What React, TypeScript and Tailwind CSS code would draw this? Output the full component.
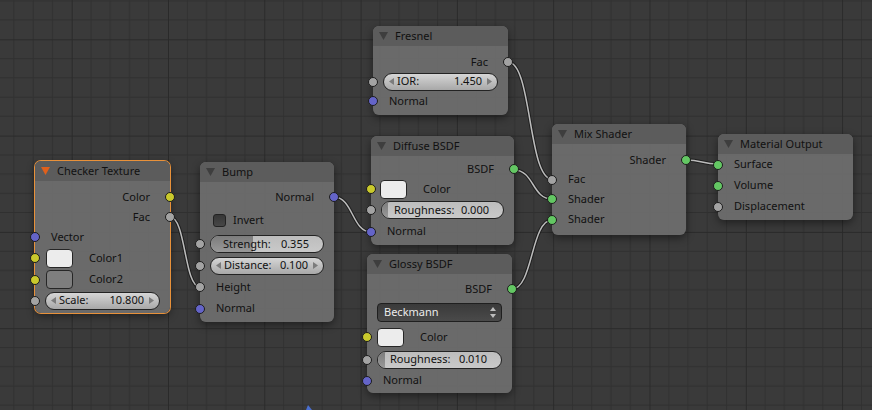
import type { ReactNode } from 'react';

type SockColor = 'yellow' | 'gray' | 'blue' | 'green';

const SOCK: Record<SockColor, string> = {
  yellow: 'bg-[#c9c92c]',
  gray: 'bg-[#a3a3a3]',
  blue: 'bg-[#6464c8]',
  green: 'bg-[#63c763]',
};

function Socket({ color, side }: { color: SockColor; side: 'in' | 'out' }) {
  return (
    <span
      className={`absolute top-1/2 -translate-y-1/2 w-[10px] h-[10px] rounded-full border border-[#1c1c1c] ${SOCK[color]} ${
        side === 'in' ? 'left-[-5px]' : 'right-[-5px]'
      }`}
    />
  );
}

function Node({
  title,
  className,
  selected,
  children,
}: {
  title: string;
  className: string;
  selected?: boolean;
  children: ReactNode;
}) {
  return (
    <div
      className={`absolute rounded-[6px] bg-[#6d6d6d]/95 shadow-[0_3px_8px_rgba(0,0,0,0.45)] ${
        selected ? 'ring-1 ring-[#e8913a]' : ''
      } ${className}`}
    >
      <div className="h-[20px] flex items-center rounded-t-[6px] bg-[#5c5c5c] pl-[6px]">
        <svg width="9" height="8" viewBox="0 0 9 8">
          <polygon points="0,0 9,0 4.5,8" fill={selected ? '#e0601c' : '#3e3e3e'} />
        </svg>
        <span className="ml-[7px] text-[11px] text-[#111]">{title}</span>
      </div>
      {children}
    </div>
  );
}

function Out({ label, color, h }: { label: string; color: SockColor; h: string }) {
  return (
    <div className={`relative flex items-center justify-end pr-[20px] ${h}`}>
      {label}
      <Socket color={color} side="out" />
    </div>
  );
}

function In({ label, color, h }: { label: string; color: SockColor; h: string }) {
  return (
    <div className={`relative flex items-center pl-[16px] ${h}`}>
      {label}
      <Socket color={color} side="in" />
    </div>
  );
}

function Swatch({ label, fill, h, pl }: { label: string; fill: string; h: string; pl: string }) {
  return (
    <div className={`relative flex items-center ${pl} ${h}`}>
      <span className={`w-[27px] h-[19px] rounded-[4px] border border-[#262626] ${fill}`} />
      <span className="ml-[16px]">{label}</span>
      <Socket color="yellow" side="in" />
    </div>
  );
}

function Arrow({ dir }: { dir: 'l' | 'r' }) {
  return (
    <svg width="5" height="7" viewBox="0 0 5 7" className="shrink-0">
      <polygon points={dir === 'l' ? '5,0 5,7 0,3.5' : '0,0 0,7 5,3.5'} fill="#7c7c7c" />
    </svg>
  );
}

function NumField({ label, value, h, px }: { label: string; value: string; h: string; px: string }) {
  return (
    <div className={`relative flex items-center ${px} ${h}`}>
      <div className="flex-1 h-[18px] flex items-center rounded-full border border-[#232323] bg-gradient-to-b from-[#d6d6d6] to-[#a8a8a8] px-[5px] text-[#111]">
        <Arrow dir="l" />
        <span className="ml-[3px]">{label}</span>
        <span className="flex-1" />
        <span className="mr-[5px]">{value}</span>
        <Arrow dir="r" />
      </div>
      <Socket color="gray" side="in" />
    </div>
  );
}

function Slider({ label, value, pct, h, px }: { label: string; value: string; pct: number; h: string; px: string }) {
  return (
    <div className={`relative flex items-center ${px} ${h}`}>
      <div className="relative flex-1 h-[18px] rounded-full border border-[#232323] bg-gradient-to-b from-[#bdbdbd] to-[#c9c9c9] overflow-hidden">
        <div
          className="absolute left-0 top-0 bottom-0 bg-gradient-to-b from-[#7c7c7c] to-[#999999]"
          style={{ width: `calc(6px + ${pct} * (100% - 12px))` }}
        />
        <div className="relative h-full flex items-center pl-[12px] pr-[14px] text-[#111]">
          <span>{label}</span>
          <span className="flex-1" />
          <span>{value}</span>
        </div>
      </div>
      <Socket color="gray" side="in" />
    </div>
  );
}

const links = [
  'M170,217 C186,217 184,287 200,287',
  'M334,197 C353,197 352,232 371,232',
  'M508,62 C532,62 528,179 552,179',
  'M514,170 C534,170 532,199 552,199',
  'M512,289 C533,289 531,220 552,220',
  'M686,160 C702,160 702,164 718,164',
];

export default function App() {
  return (
    <div className="relative w-[872px] h-[410px] overflow-hidden bg-[#3a3a3a] font-['Noto_Sans',sans-serif] text-[11px] text-[#111]">
      <svg className="absolute inset-0" width="872" height="410">
        <defs>
          <pattern id="grid" x="71.7" y="39.3" width="96.3" height="96.3" patternUnits="userSpaceOnUse">
            {[19.26, 38.52, 57.78, 77.04].map((p) => (
              <g key={p}>
                <line x1={p} y1="0" x2={p} y2="96.3" stroke="#303030" strokeWidth="1" />
                <line x1="0" y1={p} x2="96.3" y2={p} stroke="#303030" strokeWidth="1" />
              </g>
            ))}
            <line x1="0" y1="0" x2="0" y2="96.3" stroke="#2a2a2a" strokeWidth="2" />
            <line x1="0" y1="0" x2="96.3" y2="0" stroke="#2a2a2a" strokeWidth="2" />
          </pattern>
        </defs>
        <rect width="872" height="410" fill="url(#grid)" />
        {links.map((d) => (
          <g key={d}>
            <path d={d} fill="none" stroke="#1e1e1e" strokeWidth="3.5" />
            <path d={d} fill="none" stroke="#bcbcbc" strokeWidth="1.5" />
          </g>
        ))}
        <polygon points="308,405 312,410 306,410" fill="#4a6fd0" />
      </svg>

      <Node title="Checker Texture" selected className="left-[35px] top-[161px] w-[135px]">
        <div className="pt-[6px] pb-[2px]">
          <Out label="Color" color="yellow" h="h-[20px]" />
          <Out label="Fac" color="gray" h="h-[20px]" />
          <In label="Vector" color="blue" h="h-[20px]" />
          <Swatch label="Color1" fill="bg-[#ececec]" h="h-[22px]" pl="pl-[11px]" />
          <Swatch label="Color2" fill="bg-[#7e7e7e]" h="h-[21px]" pl="pl-[11px]" />
          <NumField label="Scale:" value="10.800" h="h-[21px]" px="px-[10px]" />
        </div>
      </Node>

      <Node title="Bump" className="left-[200px] top-[162px] w-[134px]">
        <div className="pt-[5px] pb-[3px]">
          <Out label="Normal" color="blue" h="h-[20px]" />
          <div className="flex items-center pl-[13px] h-[26px]">
            <span className="w-[13px] h-[13px] rounded-[3px] border border-[#222] bg-gradient-to-b from-[#363636] to-[#474747]" />
            <span className="ml-[7px]">Invert</span>
          </div>
          <Slider label="Strength:" value="0.355" pct={0.355} h="h-[22px]" px="px-[10px]" />
          <NumField label="Distance:" value="0.100" h="h-[21px]" px="px-[10px]" />
          <In label="Height" color="gray" h="h-[22px]" />
          <In label="Normal" color="blue" h="h-[21px]" />
        </div>
      </Node>

      <Node title="Fresnel" className="left-[373px] top-[26px] w-[135px]">
        <div className="pt-[6px] pb-[4px]">
          <Out label="Fac" color="gray" h="h-[20px]" />
          <NumField label="IOR:" value="1.450" h="h-[19px]" px="px-[10px]" />
          <In label="Normal" color="blue" h="h-[20px]" />
        </div>
      </Node>

      <Node title="Diffuse BSDF" className="left-[371px] top-[136px] w-[143px]">
        <div className="pt-[3px] pb-[3px]">
          <Out label="BSDF" color="green" h="h-[20px]" />
          <Swatch label="Color" fill="bg-[#ececec]" h="h-[20px]" pl="pl-[9px]" />
          <Slider label="Roughness:" value="0.000" pct={0} h="h-[22px]" px="px-[10px]" />
          <In label="Normal" color="blue" h="h-[21px]" />
        </div>
      </Node>

      <Node title="Glossy BSDF" className="left-[367px] top-[254px] w-[145px]">
        <div className="pt-[5px] pb-[2px]">
          <Out label="BSDF" color="green" h="h-[20px]" />
          <div className="flex items-center px-[10px] h-[26px]">
            <div className="flex-1 h-[19px] flex items-center rounded-[4px] border border-[#1f1f1f] bg-gradient-to-b from-[#3a3a3a] to-[#4a4a4a] pl-[6px] pr-[5px] text-[#ececec]">
              <span>Beckmann</span>
              <span className="flex-1" />
              <svg width="6" height="11" viewBox="0 0 6 11">
                <polygon points="0,4 6,4 3,0" fill="#bdbdbd" />
                <polygon points="0,7 6,7 3,11" fill="#bdbdbd" />
              </svg>
            </div>
          </div>
          <Swatch label="Color" fill="bg-[#ececec]" h="h-[24px]" pl="pl-[10px]" />
          <Slider label="Roughness:" value="0.010" pct={0.01} h="h-[21px]" px="px-[10px]" />
          <In label="Normal" color="blue" h="h-[21px]" />
        </div>
      </Node>

      <Node title="Mix Shader" className="left-[552px] top-[124px] w-[134px]">
        <div className="pt-[6px] pb-[5px]">
          <Out label="Shader" color="green" h="h-[20px]" />
          <In label="Fac" color="gray" h="h-[19px]" />
          <In label="Shader" color="green" h="h-[20px]" />
          <In label="Shader" color="green" h="h-[21px]" />
        </div>
      </Node>

      <Node title="Material Output" className="left-[718px] top-[134px] w-[135px]">
        <div className="pb-[3px]">
          <In label="Surface" color="green" h="h-[21px]" />
          <In label="Volume" color="green" h="h-[21px]" />
          <In label="Displacement" color="gray" h="h-[21px]" />
        </div>
      </Node>
    </div>
  );
}
